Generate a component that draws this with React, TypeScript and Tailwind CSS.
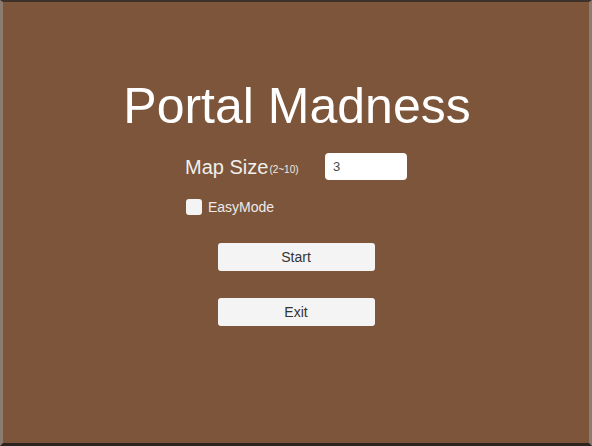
import React from "react";

export default function App() {
  return (
    <div
      className="w-[592px] h-[446px] bg-[#7c553a] border-t-[2px] border-t-[#3e3129] border-l-[3px] border-l-[#8b7b70] border-r-[3px] border-r-[#8b7b70] border-b-[3px] border-b-[#2b241f] flex flex-col items-center"
      style={{ fontFamily: '"Liberation Sans", Arial, sans-serif' }}
    >
      <h1 className="mt-[79px] text-[50px] leading-[50px] text-white ml-[2px]">Portal Madness</h1>
      <div className="mt-[22px] w-[222px] flex flex-col">
        <div className="flex items-center h-[27px]">
          <span className="text-[20px] leading-[24px] text-[#f2efec] mt-[1px]">Map Size</span>
          <span className="text-[10px] leading-[12px] text-[#eeeae6] mt-[6px] ml-[1px]">(2~10)</span>
          <div className="ml-auto w-[82px] h-[27px] bg-white rounded-[4px] flex items-center pl-[8px] text-[13px] text-[#4a4a4a]">
            3
          </div>
        </div>
        <div className="flex items-center mt-[19px] ml-[1px]">
          <div className="w-[16px] h-[16px] bg-[#f4f4f4] rounded-[3px]" />
          <span className="ml-[6px] text-[14px] leading-[16px] text-[#eeeae7]">EasyMode</span>
        </div>
      </div>
      <button className="mt-[28px] w-[157px] h-[28px] bg-[#f4f4f4] rounded-[3px] text-[14px] text-[#333] flex items-center justify-center">
        Start
      </button>
      <button className="mt-[27px] w-[157px] h-[28px] bg-[#f4f4f4] rounded-[3px] text-[14px] text-[#333] flex items-center justify-center">
        Exit
      </button>
    </div>
  );
}
